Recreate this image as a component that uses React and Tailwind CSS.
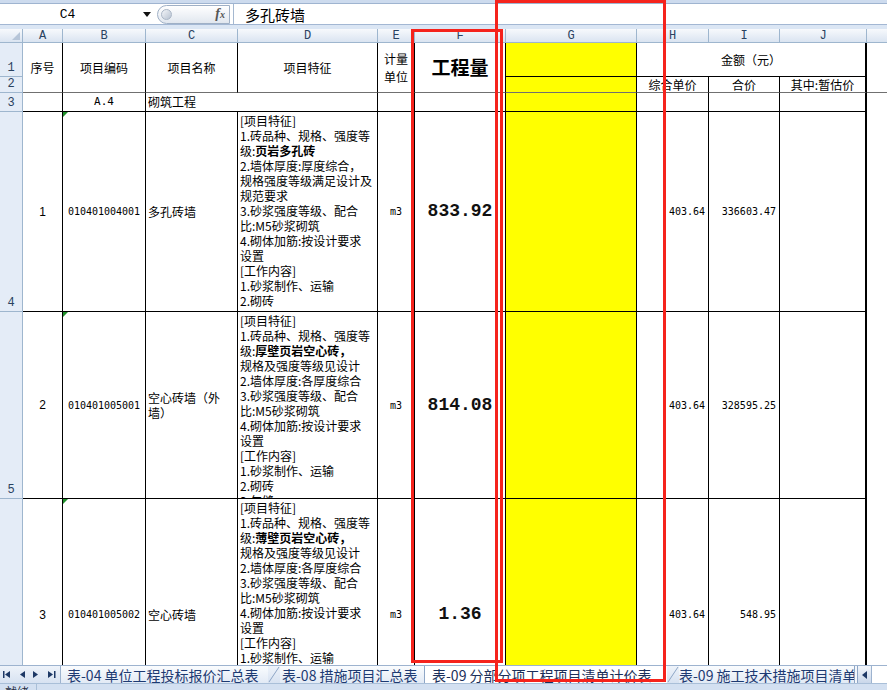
const cjk = "font-['Noto_Sans_CJK_SC',sans-serif]"
const mono = "font-['DejaVu_Sans_Mono',monospace]"
const cmono = "font-['Liberation_Mono',monospace]"
const sans = "font-['Liberation_Sans',sans-serif]"

const colHdr = `flex items-center justify-center border-r border-b border-[#9eb6ce] bg-linear-to-b from-[#f7f9fc] to-[#dae4f1] text-[12px] leading-none text-[#2a4260] ${cmono}`
const rowHdr = `flex items-end justify-center pb-[2px] border-r border-b border-[#9eb6ce] bg-[#e4ecf7] text-[12px] leading-none text-[#2a4260] ${cmono}`
const cell = 'border-r border-b border-black'
const freeze = 'border-r border-b border-r-black border-b-[#707070]'

const work = ['[工作内容]', '1.砂浆制作、运输', '2.砌砖']

const rows = [
	{
		rs: 'row-start-5',
		rh: '4',
		n: '1',
		code: '010401004001',
		name: ['多孔砖墙'],
		lines: [
			'[项目特征]',
			'1.砖品种、规格、强度等',
			{ pre: '级:', b: '页岩多孔砖' },
			'2.墙体厚度:厚度综合，',
			'规格强度等级满足设计及',
			'规范要求',
			'3.砂浆强度等级、配合',
			'比:M5砂浆砌筑',
			'4.砌体加筋:按设计要求',
			'设置',
			...work,
		],
		qty: '833.92',
		price: '403.64',
		total: '336603.47',
	},
	{
		rs: 'row-start-6',
		rh: '5',
		n: '2',
		code: '010401005001',
		name: ['空心砖墙（外', '墙）'],
		lines: [
			'[项目特征]',
			'1.砖品种、规格、强度等',
			{ pre: '级:', b: '厚壁页岩空心砖，' },
			'规格及强度等级见设计',
			'2.墙体厚度:各厚度综合',
			'3.砂浆强度等级、配合',
			'比:M5砂浆砌筑',
			'4.砌体加筋:按设计要求',
			'设置',
			...work,
			'3.勾缝',
		],
		qty: '814.08',
		price: '403.64',
		total: '328595.25',
	},
	{
		rs: 'row-start-7',
		rh: '6',
		n: '3',
		code: '010401005002',
		name: ['空心砖墙'],
		lines: [
			'[项目特征]',
			'1.砖品种、规格、强度等',
			{ pre: '级:', b: '薄壁页岩空心砖，' },
			'规格及强度等级见设计',
			'2.墙体厚度:各厚度综合',
			'3.砂浆强度等级、配合',
			'比:M5砂浆砌筑',
			'4.砌体加筋:按设计要求',
			'设置',
			...work,
			'3.勾缝',
		],
		qty: '1.36',
		price: '403.64',
		total: '548.95',
	},
]

function DataRow({ d }) {
	return (
		<>
			<div className={`col-start-1 ${d.rs} ${rowHdr}`}>{d.rh}</div>
			<div className={`col-start-2 ${d.rs} ${cell} flex items-center justify-center text-[12px] ${sans}`}>{d.n}</div>
			<div className={`col-start-3 ${d.rs} ${cell} relative flex items-center justify-center text-[10px] ${mono}`}>
				<span className="absolute left-0 top-0 w-0 h-0 border-t-[5px] border-r-[5px] border-t-[#1f8f2a] border-r-transparent" />
				{d.code}
			</div>
			<div className={`col-start-4 ${d.rs} ${cell} flex flex-col justify-center pl-[2px] text-[12px] leading-[15px] ${cjk}`}>
				{d.name.map((t) => (
					<span key={t}>{t}</span>
				))}
			</div>
			<div className={`col-start-5 ${d.rs} ${cell} overflow-hidden pl-[2px] pt-[1px] text-[12px] leading-[15px] whitespace-nowrap ${cjk}`}>
				{d.lines.map((l, i) =>
					typeof l === 'string' ? (
						<div key={i}>{l}</div>
					) : (
						<div key={i}>
							{l.pre}
							<b className="font-bold">{l.b}</b>
						</div>
					)
				)}
			</div>
			<div className={`col-start-6 ${d.rs} ${cell} flex items-center justify-center text-[10px] text-black ${mono}`}>m3</div>
			<div className={`col-start-7 ${d.rs} ${cell} flex items-center justify-center text-[18px] font-bold text-[#111] ${cmono}`}>{d.qty}</div>
			<div className={`col-start-8 ${d.rs} ${cell} bg-[#ffff00]`} />
			<div className={`col-start-9 ${d.rs} ${cell} flex items-center justify-end pr-[3px] text-[10px] ${mono}`}>{d.price}</div>
			<div className={`col-start-10 ${d.rs} ${cell} flex items-center justify-end pr-[3px] text-[10px] ${mono}`}>{d.total}</div>
			<div className={`col-start-11 ${d.rs} border-r-2 border-b border-black`} />
			<div className={`col-start-12 ${d.rs}`} />
		</>
	)
}

function FormulaBar() {
	return (
		<div className="h-[29px] flex flex-col bg-[#dbe6f4]">
			<div className="h-[4px] bg-[#cddbee] border-b border-[#9fb4d0]" />
			<div className="h-[20px] flex bg-white">
				<div className="w-[155px] flex items-center">
					<span className={`w-[135px] text-center text-[13px] leading-none text-black ${cmono}`}>C4</span>
					<svg width="8" height="5" className="ml-[8px]">
						<polygon points="0,0 8,0 4,5" fill="#111" />
					</svg>
				</div>
				<div className="w-[78px] flex items-center pl-[2px]">
					<div className="w-[73px] h-[19px] rounded-l-full rounded-r-[3px] border border-[#9fb0c6] bg-linear-to-b from-white to-[#e1e7ef] flex items-center justify-between pl-[3px] pr-[4px]">
						<span className="w-[11px] h-[11px] rounded-full border border-[#aab6c6] bg-linear-to-br from-[#f4f6f9] to-[#b7c2d1]" />
						<span className="font-['Liberation_Serif',serif] italic font-bold text-[14px] leading-none text-[#555]">
							f<span className="text-[10px]">x</span>
						</span>
					</div>
				</div>
				<div className={`flex-1 flex items-center border-l border-[#a5b8d0] pl-[11px] text-[15px] leading-none text-black ${cjk}`}>多孔砖墙</div>
			</div>
			<div className="h-[1px] bg-[#a3b7d3]" />
			<div className="h-[4px] bg-[#dbe6f4]" />
		</div>
	)
}

function Sheet() {
	const letters = ['A', 'B', 'C', 'D', 'E', 'F', 'G', 'H', 'I', 'J']
	return (
		<div className={`h-[636px] overflow-hidden grid grid-cols-[23px_40px_83px_92px_140px_37px_91px_131px_72px_71px_87px_20px] grid-rows-[14px_34px_16px_19px_200px_187px_232px] text-black ${cjk}`}>
			{/* column headers */}
			<div className="col-start-1 row-start-1 border-r border-b border-[#9eb6ce] bg-linear-to-b from-[#f7f9fc] to-[#dae4f1] flex items-end justify-end p-[2px]">
				<svg width="8" height="8">
					<polygon points="8,0 8,8 0,8" fill="#b6c5d8" />
				</svg>
			</div>
			{letters.map((l) => (
				<div key={l} className={`row-start-1 ${colHdr}`}>
					{l}
				</div>
			))}
			<div className="row-start-1 border-b border-[#9eb6ce] bg-linear-to-b from-[#f7f9fc] to-[#dae4f1]" />

			{/* sheet rows 1-2 */}
			<div className={`col-start-1 row-start-2 ${rowHdr}`}>1</div>
			<div className={`col-start-1 row-start-3 ${rowHdr}`}>2</div>
			<div className={`col-start-2 row-start-2 row-span-2 ${freeze} flex items-center justify-center text-[12px]`}>序号</div>
			<div className={`col-start-3 row-start-2 row-span-2 ${freeze} flex items-center justify-center text-[12px]`}>项目编码</div>
			<div className={`col-start-4 row-start-2 row-span-2 ${freeze} flex items-center justify-center text-[12px]`}>项目名称</div>
			<div className={`col-start-5 row-start-2 row-span-2 ${freeze} flex items-center justify-center text-[12px]`}>项目特征</div>
			<div className={`col-start-6 row-start-2 row-span-2 ${freeze} flex flex-col items-center justify-center text-[12px] leading-[18px]`}>
				<span>计量</span>
				<span>单位</span>
			</div>
			<div className={`col-start-7 row-start-2 row-span-2 ${freeze} flex items-center justify-center text-[19px] font-bold`}>工程量</div>
			<div className={`col-start-8 row-start-2 ${cell} bg-[#ffff00]`} />
			<div className={`col-start-8 row-start-3 ${freeze} bg-[#ffff00]`} />
			<div className="col-start-9 col-span-3 row-start-2 border-r-2 border-b border-black flex items-center justify-center text-[12px]">金额（元）</div>
			<div className="col-start-12 row-start-2 row-span-2 border-b border-[#707070]" />
			<div className={`col-start-9 row-start-3 ${freeze} flex items-center justify-center text-[12px] leading-none`}>综合单价</div>
			<div className={`col-start-10 row-start-3 ${freeze} flex items-center justify-center text-[12px] leading-none`}>合价</div>
			<div className="col-start-11 row-start-3 border-r-2 border-b border-r-black border-b-[#707070] flex items-center justify-center text-[12px] leading-none">
				其中:暂估价
			</div>

			{/* sheet row 3 */}
			<div className={`col-start-1 row-start-4 ${rowHdr}`}>3</div>
			<div className={`col-start-2 row-start-4 ${cell}`} />
			<div className={`col-start-3 row-start-4 ${cell} flex items-center justify-center text-[11px] ${mono}`}>A.4</div>
			<div className={`col-start-4 col-span-2 row-start-4 ${cell} flex items-center pl-[2px] text-[12px]`}>砌筑工程</div>
			<div className={`col-start-6 row-start-4 ${cell}`} />
			<div className={`col-start-7 row-start-4 ${cell}`} />
			<div className={`col-start-8 row-start-4 ${cell} bg-[#ffff00]`} />
			<div className={`col-start-9 row-start-4 ${cell}`} />
			<div className={`col-start-10 row-start-4 ${cell}`} />
			<div className="col-start-11 row-start-4 border-r-2 border-b border-black" />
			<div className="col-start-12 row-start-4" />

			{rows.map((d) => (
				<DataRow key={d.rh} d={d} />
			))}
		</div>
	)
}

function Slant() {
	return (
		<svg width="12" height="17" className="shrink-0">
			<line x1="1" y1="16" x2="11" y2="1" stroke="#8ea6c6" strokeWidth="1" />
		</svg>
	)
}

function TabBar() {
	return (
		<div className={`h-[18px] flex bg-linear-to-b from-[#eef3fa] to-[#d7e2f1] border-t border-[#9db3cf] text-[14px] leading-none text-[#1d3a72] ${cjk}`}>
			<svg width="60" height="17" className="shrink-0">
				<rect x="3" y="5" width="1.5" height="7" fill="#1e3966" />
				<polygon points="10,5 10,12 5,8.5" fill="#1e3966" />
				<polygon points="25,5 25,12 20,8.5" fill="#1e3966" />
				<polygon points="33,5 33,12 38,8.5" fill="#1e3966" />
				<polygon points="48,5 48,12 53,8.5" fill="#1e3966" />
				<rect x="54" y="5" width="1.5" height="7" fill="#1e3966" />
			</svg>
			<div className="w-[1px] bg-[#9db3cf]" />
			<div className="w-[207px] shrink-0 flex items-center pl-[6px] whitespace-nowrap overflow-hidden bg-linear-to-b from-[#fafcfe] to-[#e2eaf5]">
				表-04 单位工程投标报价汇总表
			</div>
			<Slant />
			<div className="w-[144px] shrink-0 flex items-center pl-[2px] whitespace-nowrap overflow-hidden bg-linear-to-b from-[#fafcfe] to-[#e2eaf5]">
				表-08 措施项目汇总表
			</div>
			<div className="w-[243px] shrink-0 flex items-center pl-[7px] whitespace-nowrap overflow-hidden bg-white border-l border-[#8ea6c6] text-[#1b2f5a]">
				表-09 分部分项工程项目清单计价表
			</div>
			<Slant />
			<div className="w-[175px] shrink-0 flex items-center whitespace-nowrap overflow-hidden bg-linear-to-b from-[#fafcfe] to-[#e2eaf5]">
				表-09 施工技术措施项目清单计价表
			</div>
			<div className="w-[4px] shrink-0 border-x border-[#8ea6c6] bg-[#f4f7fb]" />
			<div className="w-[14px] shrink-0 flex items-center justify-center bg-linear-to-b from-[#f3f6fb] to-[#c9d7ea] border-r border-[#9db3cf]">
				<svg width="5" height="8">
					<polygon points="5,0 5,8 0,4" fill="#1e3966" />
				</svg>
			</div>
			<div className="flex-1 bg-white" />
		</div>
	)
}

export default function App() {
	return (
		<div className="relative w-[887px] h-[690px] overflow-hidden bg-white">
			<FormulaBar />
			<Sheet />
			<TabBar />
			<div className="h-[7px] overflow-hidden flex bg-[#d3e0f1] border-t border-[#a9bfd8]">
				<div className={`w-[37px] pl-[5px] pt-[1px] text-[12px] leading-[14px] text-[#1e2b3e] border-r border-[#a9bfd8] ${cjk}`}>就绪</div>
			</div>

			{/* red highlight boxes */}
			<div className="absolute left-[411px] top-[29px] w-[92px] h-[634px] border-[3px] border-[#f5231c]" />
			<div className="absolute left-[495px] top-0 w-[171px] h-[682px] border-[3px] border-[#f5231c]" />
		</div>
	)
}
